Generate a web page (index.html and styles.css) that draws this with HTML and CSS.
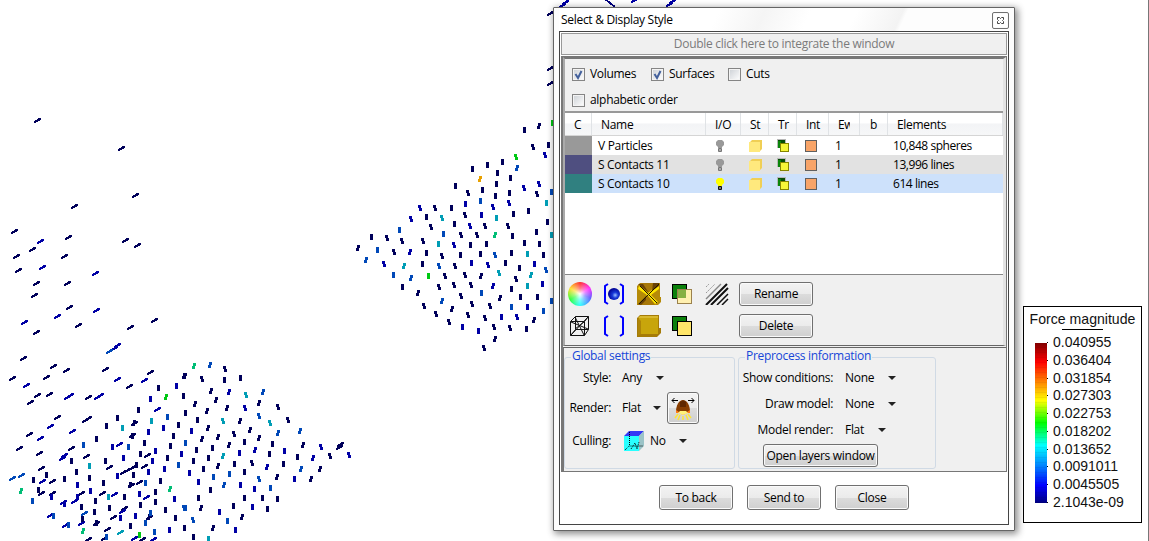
FILE: index.html
```
<!DOCTYPE html>
<html lang="en">
<head>
<meta charset="utf-8">
<title>Select &amp; Display Style</title>
<link rel="stylesheet" href="styles.css">
</head>
<body>
<svg class="plot" width="1149" height="541" shape-rendering="crispEdges"></svg>
<div class="edge"></div>

<svg class="defs" width="0" height="0">
  <defs>
    <symbol id="bulb" viewBox="0 0 10 14"><path d="M3 1h4l2 2v3L7 8v1H3V8L1 6V3z"/><path d="M3.500 9.500h3v3h-3zM3 11h4" fill="#ddd" stroke="currentColor"/></symbol>
    <symbol id="box" viewBox="0 0 13 12"><path d="M3 0h10v9l-3 3V3H0z" fill="#f0cf55"/><path d="M0 2h11v10H0z" fill="#ffe97d"/></symbol>
    <symbol id="trans" viewBox="0 0 12 13"><path d="M0 0h9v9H0z" fill="#b8b8b8"/><path d="M1 1h7v8H1z" fill="#064d06"/><path d="M1 2h3v7H1z" fill="#0a850a"/><rect x="3.500" y="4.500" width="8" height="8" fill="#f6f638" stroke="#858500"/></symbol>
    <symbol id="tick" viewBox="0 0 13 13"><path d="M3.500 6l2.500 4 3.500-7" fill="none" stroke="#43609c" stroke-width="2"/></symbol>
  </defs>
</svg>

<section class="window">
  <header class="title"><span>Select &amp; Display Style</span>
    <button class="x"><svg width="9" height="9" viewBox="0 0 9 9"><path d="M1.500 1.500h2l1 1 1-1h2v2l-1 1 1 1v2h-2l-1-1-1 1h-2v-2l1-1-1-1z" fill="none" stroke="#444"/></svg></button>
  </header>
  <div class="client">
    <div class="dock">Double click here to integrate the window</div>
    <div class="body">
      <div class="upper">
        <div class="filters">
          <div class="line">
            <label class="volumes"><i class="check"><svg width="11" height="11" viewBox="1 1 11 11"><use href="#tick" width="13" height="13"/></svg></i>Volumes</label>
            <label class="surfaces"><i class="check"><svg width="11" height="11" viewBox="1 1 11 11"><use href="#tick" width="13" height="13"/></svg></i>Surfaces</label>
            <label><i class="check"></i>Cuts</label>
          </div>
          <div class="line"><label><i class="check"></i>alphabetic order</label></div>
        </div>
        <div class="table">
          <div class="row head"><span>C</span><span>Name</span><span>I/O</span><span>St</span><span>Tr</span><span>Int</span><span class="clip">Ew</span><span>b</span><span>Elements</span></div>
          <div class="row"><i class="swatch grey"></i><span>V Particles</span><svg class="bulb" width="10" height="14"><use href="#bulb"/></svg><svg class="cube" width="13" height="12"><use href="#box"/></svg><svg class="tr" width="12" height="13"><use href="#trans"/></svg><i class="int"></i><span>1</span><span></span><span>10,848 spheres</span></div>
          <div class="row odd"><i class="swatch violet"></i><span>S Contacts 11</span><svg class="bulb" width="10" height="14"><use href="#bulb"/></svg><svg class="cube" width="13" height="12"><use href="#box"/></svg><svg class="tr" width="12" height="13"><use href="#trans"/></svg><i class="int"></i><span>1</span><span></span><span>13,996 lines</span></div>
          <div class="row selected"><i class="swatch teal"></i><span>S Contacts 10</span><svg class="bulb on" width="10" height="14"><use href="#bulb"/></svg><svg class="cube" width="13" height="12"><use href="#box"/></svg><svg class="tr" width="12" height="13"><use href="#trans"/></svg><i class="int"></i><span>1</span><span></span><span>614 lines</span></div>
        </div>
        <div class="tools">
          <i class="wheel"></i>
          <svg width="22" height="22" viewBox="0 0 22 22"><defs><radialGradient id="ball" cx=".6" cy=".6" r=".6"><stop offset="0" stop-color="#9ac0ff"/><stop offset=".4" stop-color="#1638d8"/><stop offset="1" stop-color="#000090"/></radialGradient></defs><path d="M5 1L2 3v16l3 2M17 1l3 2v16l-3 2" fill="none" stroke="#0000ff" stroke-width="2"/><circle cx="11" cy="11" r="6" fill="url(#ball)"/></svg>
          <svg width="24" height="22" viewBox="0 0 24 22"><path d="M3 0h20v14h1v5l-3 3H0V3z" fill="#b58a08"/><path d="M2 3l9 7L22 2v4l-8 6 7 7-3 2-7-8-8 8H1l9-9-9-6z" fill="#ffe600"/><path d="M3 0h16l-7 9zM0 22l10-10 8 10z" fill="#a87808"/><path d="M1 1h5l6 9zM16 0h6v3l-7 5zM1 21l8-8v4l-5 5z" fill="#6a4205"/><path d="M3 3l17 17M22 1L2 21" stroke="#221800"/></svg>
          <svg width="22" height="22" viewBox="0 0 22 22"><rect x="1.500" y="1.500" width="14" height="14" fill="#0b800b" stroke="#000"/><rect x="6.500" y="6.500" width="14" height="14" fill="#fff0b0" stroke="#9b814d"/><path d="M7 7h8v8H7z" fill="#86b043"/></svg>
          <svg width="24" height="22" viewBox="0 0 24 22"><path d="M1 4l3-3M1 10L10 1" stroke="#999" stroke-dasharray="2 1"/><path d="M1 16L16 1" stroke="#888" stroke-width="1.500"/><path d="M1 22L22 1M6 22L23 5" stroke="#111" stroke-width="2"/><path d="M12 22l11-11M17 22l6-6" stroke="#111" stroke-width="1.500"/></svg>
          <button>Rename</button>
          <svg width="22" height="22" viewBox="0 0 22 22"><path d="M1.500 6.500h14v14h-14zM6.500 1.500h13v13h-13zM1.500 6.500l5-5M15.500 6.500l4-5M1.500 20.500l5-6M15.500 20.500l4-6M2 7l17 7M15 7l-9 7M6 2l9 18M19 2L2 20" fill="none" stroke="#111"/></svg>
          <svg width="22" height="22" viewBox="0 0 22 22"><path d="M5 1L2 3v16l3 2M17 1l3 2v16l-3 2" fill="none" stroke="#0000ff" stroke-width="2"/></svg>
          <svg width="24" height="22" viewBox="0 0 24 22"><path d="M3 0h19v13h2v5l-4 4H0V3z" fill="#a57b08"/><path d="M2 3h19v16H2z" fill="#c8a50b"/><path d="M3 1h18v2H1z" fill="#d8b82f"/><path d="M1 3l3 3v13l-3 2z" fill="#ae8508"/></svg>
          <svg width="22" height="22" viewBox="0 0 22 22"><rect x="1.500" y="1.500" width="14" height="14" fill="#0b800b" stroke="#000"/><rect x="6.500" y="6.500" width="14" height="14" fill="#ffe66a" stroke="#000"/></svg>
          <i></i>
          <button>Delete</button>
        </div>
      </div>
      <div class="lower">
        <fieldset class="global"><legend>Global settings</legend>
          <div class="field style"><span>Style:</span><span>Any</span><i class="arrow"></i></div>
          <div class="field render"><span>Render:</span><span>Flat</span><i class="arrow"></i>
            <button class="lamp"><svg width="26" height="26" viewBox="0 0 26 26"><path d="M2 5.500h6M4.500 3L2 5.500 4.500 8M18 5.500h6M21.500 3L24 5.500 21.500 8" fill="none" stroke="#000"/><path d="M6 17c0-7 3-12 7-12s7 5 7 12l-3 1H9z" fill="#873d00"/><path d="M10 7c2-2 4-2 6 0v5h-6z" fill="#602800"/><path d="M6 15l3 2h8l3-2v3h-3l-4 2-4-2H6z" fill="#ff7b16"/><path d="M10 16h6l2 2-5 2-5-2z" fill="#fff27a"/><path d="M8 19l-3 4M10 20l-2 5M13 21v4M16 20l2 5M18 19l3 4" stroke="#ffe536" stroke-width="1.500"/></svg></button></div>
          <div class="field culling"><span>Culling:</span><svg width="20" height="20" viewBox="0 0 20 20"><path d="M0 5h15v15H0z" fill="#29ffff"/><path d="M0 5l5-5h15l-5 5z" fill="#3438f5"/><path d="M15 5l5-5v15l-5 5z" fill="#9bc4c8"/><path d="M5.500 1v14h14M1 19l4-4M7 18l4-6 2 6 2-7" fill="none" stroke="#000" stroke-dasharray="1 1"/></svg><span>No</span><i class="arrow"></i></div>
        </fieldset>
        <fieldset class="pre"><legend>Preprocess information</legend>
          <div class="field"><span>Show conditions:</span><span>None</span><i class="arrow"></i></div>
          <div class="field"><span>Draw model:</span><span>None</span><i class="arrow"></i></div>
          <div class="field short"><span>Model render:</span><span>Flat</span><i class="arrow"></i></div>
          <button class="layers">Open layers window</button>
        </fieldset>
      </div>
    </div>
    <footer><button>To back</button><button>Send to</button><button>Close</button></footer>
  </div>
</section>

<aside class="scale">
  <h2>Force magnitude</h2>
  <div class="values"><i class="ramp"></i>
    <ol><li>0.040955</li><li>0.036404</li><li>0.031854</li><li>0.027303</li><li>0.022753</li><li>0.018202</li><li>0.013652</li><li>0.0091011</li><li>0.0045505</li><li>2.1043e-09</li></ol>
  </div>
</aside>
<script src="marks.js"></script>
</body>
</html>
```
FILE: styles.css
```
* { box-sizing: border-box; }
body { margin: 0; width: 1149px; height: 541px; overflow: hidden; position: relative; background: #fff; font: 12px/16px "Open Sans", "Noto Sans", sans-serif; letter-spacing: -0.3px; color: #000; }
.plot { position: absolute; left: 0; top: 0; }
.defs { position: absolute; }
.edge { position: absolute; right: 0; top: 0; width: 1px; height: 541px; background: #777; }
button { font: inherit; letter-spacing: inherit; color: #000; padding: 0; border: 1px solid #707070; border-radius: 3px; background: linear-gradient(#f3f3f3, #ebebeb 50%, #dcdcdc 51%, #cfcfcf); box-shadow: inset 0 0 0 1px #fafafa; }
.window { position: absolute; left: 553px; top: 7px; width: 462px; height: 524px; border: 1px solid #656565; border-radius: 1px; background: #fdfdfd; box-shadow: 2px 2px 7px 1px rgba(0,0,0,.45); padding: 0 5px; }
.title { height: 23px; display: flex; justify-content: space-between; padding: 4px 0 0 2px; background: linear-gradient(115deg, #fff 0 35%, #f5f5f5 45%, #fff 55% 65%, #f3f3f3 75%, #fdfdfd 76%); }
.x { width: 17px; height: 17px; border-radius: 2px; background: #fff; display: grid; place-items: center; }
.client { border: 1px solid #444; height: 494px; width: 450px; background: #fff; padding: 1px; }
.dock { height: 22px; width: 446px; border: 1px solid #999; background: #f0f0f0; text-align: center; line-height: 20px; color: #7b7b7b; }
.body { width: 446px; margin-top: 1px; border: 1px solid #777; border-left: 2px solid #777; background: #f0f0f0; height: 416px; }
.upper { height: 289px; border-top: 2px solid #777; border-left: 2px solid #aaa; border-right: 3px solid #e3e3e3; border-bottom: 1px solid #666; }
.filters { height: 52px; padding: 7px 0 0 7px; }
.line { display: flex; height: 26px; }
label { display: flex; gap: 5px; align-items: center; height: 16px; }
.volumes { width: 79px; }
.surfaces { width: 77px; }
.check { width: 13px; height: 13px; border: 1px solid #858585; background: linear-gradient(135deg, #ccd0d5, #fff); box-shadow: inset 0 0 0 1px #f4f4f4; display: block; }
.check svg { display: block; }
.table { height: 164px; border-top: 2px solid #999; background: #fff; border-bottom: 1px solid #888; }
.row { display: grid; grid-template-columns: 27px 114px 35px 28px 28px 32px 30px 29px 1fr; height: 19px; align-items: center; }
.row > span { padding-left: 6px; white-space: nowrap; }
.head { height: 23px; background: linear-gradient(#fff 45%, #f3f4f6 50%, #f6f7f8); border-bottom: 1px solid #d5d5d5; }
.head > span { padding-left: 9px; border-right: 1px solid #e0e3e6; height: 22px; line-height: 24px; overflow: hidden; }
.row .clip { width: 30px; border-right: 0; clip-path: inset(0 9px 0 0); }
.head > span:nth-child(8) { padding-left: 10px; border-left: 1px solid #e0e3e6; }
.swatch { height: 19px; width: 27px; }
.grey { background: #999; }
.violet { background: #4f4f80; }
.teal { background: #308080; }
.odd { background: #e2e2e2; }
.selected { background: #cde1fb; }
.bulb { margin-left: 9px; color: #777; fill: #999; }
.on { color: #111; fill: #ff0; }
.cube { margin-left: 8px; }
.tr { margin-left: 8px; }
.int { width: 12px; height: 12px; background: #f8a468; border: 1px solid #606060; margin-left: 8px; }
.row > span:last-child { padding-left: 5px; letter-spacing: -.45px; }
.head > span:last-child { padding-left: 9px; letter-spacing: inherit; }
.tools { display: grid; grid-template-columns: 34px 34px 34px 34px 35px 74px; grid-template-rows: 24px 24px; row-gap: 8px; padding: 7px 0 0 3px; align-items: center; }
.tools button { height: 24px; }
.wheel { width: 24px; height: 24px; border-radius: 50%; background: radial-gradient(circle closest-side, #fff 0, #fff6 45%, transparent 95%), conic-gradient(#ff3030, #ff30ff 60deg, #6060ff 110deg, #30ffff 180deg, #30ff40 240deg, #ffe030 300deg, #ff3030); }
.tools svg { margin-left: 1px; }
.lower { height: 124px; border-top: 1px solid #666; border-left: 1px solid #777; margin-top: 1px; display: flex; align-items: flex-start; padding: 2px 0 0; gap: 3px; }
fieldset { margin: 0; border: 1px solid #d0dae5; border-radius: 3px; padding: 0; height: 119px; min-width: 0; }
.global { width: 171px; }
.pre { width: 198px; }
legend { color: #1646d8; padding: 0 1px; margin-left: 6px; height: 14px; line-height: 12px; margin-bottom: 1px; }
.field { display: grid; align-items: center; height: 26px; grid-template-columns: 94px 31px 8px; column-gap: 12px; }
.field > span:first-child { text-align: right; }
.arrow { border: 4px solid transparent; border-top-color: #222; border-bottom: 0; width: 8px; }
.pre .short { grid-template-columns: 94px 21px 8px; }
.global .field { grid-template-columns: 45px 23px 8px; column-gap: 11px; margin-left: 1px; }
.global .render { height: 34px; grid-template-columns: 45px 20px 8px 32px; }
.render .lamp { margin-left: -5px; }
.global .culling { grid-template-columns: 45px 20px 15px 8px; height: 32px; }
.culling svg { margin-left: 2px; }
.culling > span:nth-child(3) { margin-left: -3px; }
.lamp { width: 32px; height: 32px; display: grid; place-items: center; }
.layers { width: 115px; height: 23px; margin-left: 24px; display: block; margin-top: 1px; line-height: 20px; }
footer { display: flex; gap: 14px; padding: 13px 0 0 98px; }
footer button { width: 74px; height: 25px; }
.scale { position: absolute; left: 1023px; top: 306px; width: 119px; height: 217px; border: 1px solid #000; background: #fff; font: 14px/18px "Liberation Sans", Arial, sans-serif; letter-spacing: 0; color: #111; }
.scale h2 { font: inherit; font-size: 14.1px; line-height: 17px; margin: 4px 0 0; text-align: center; white-space: nowrap; }
.scale h2::after { content: ""; display: block; width: 41px; height: 1px; background: #000; margin: 1px auto 0; }
.values { display: flex; padding: 3px 0 0 11px; }
.ramp { width: 12px; height: 160px; margin-top: 10px; background: repeating-linear-gradient(transparent 0 4px, rgba(0,0,0,.05) 4px 5px), linear-gradient(#800000, #f00 12%, #ff8000 24%, #ff0 36%, #0f0 50%, #0ff 64%, #0080ff 77%, #00f 89%, #000080); }
ol { list-style: none; margin: 0; padding: 0; }
li { height: 17.78px; padding-left: 6px; position: relative; }
li::before { content: ""; position: absolute; left: 0; top: 9px; width: 1px; height: 1px; background: #000; }
```
FILE: marks.js
```
// Contact marks; coordinates are thirds of a pixel from each field's origin.
// Kinds: s slanted, v vertical, k kinked right at top, j kinked left at top.
const colours = { n: '#00005a', b: '#0000a5', m: '#0048b8', t: '#009db5', g: '#00bd76', l: '#00c814', o: '#e8a000' };
const shapes = {
  s: '<path d="M-3 1h1v-1h2v-1h1v-1h3v2h-1v1h-2v1h-2v1h-2z"/>',
  v: '<path d="M-1 -3h3v6h-3z"/>',
  k: '<path d="M-1 -3h3v3h-1v3h-3v-3h1z"/>',
  j: '<path d="M-2 -3h3v3h1v3h-3v-3h-1z"/>'
};
const fields = [
  [0, 90, {
    sn: '112,91 364,174 405,315 222,349 43,424 206,440 97,477 49,497 193,499 376,451 412,465 55,541 108,580 201,580 103,616 207,650 234,705 110,727 391,712 463,691',
    sb: '121,454 127,532 286,549 290,661 171,679 73,697'
  }],
  [0, 340, {
    sn: '69,54 160,78 139,110 198,91 38,114 112,166 147,163 92,187 316,86 387,139 451,95 171,232 256,240 264,234 266,172 88,282 118,339 58,325 124,384 156,422 123,460 158,460 265,597 290,550 323,566 313,595 215,325 258,348 328,380 370,396 382,390 394,385 404,379 432,379 397,284 418,427 393,435 442,345 404,248 244,460 307,460 339,530 448,532 428,598 374,505',
    sb: '78,135 203,171 211,164 292,171 300,165 351,117 434,121 121,293 217,272 151,257 186,354 193,346 128,424 222,483 190,487 357,312 343,461 438,471 366,512 243,550 152,524 197,555 404,593 459,596 344,23 352,15 472,208',
    sm: '327,34 64,406 37,415 252,520',
    st: '360,577',
    vn: '320,259 353,235 289,298 214,364 229,397 139,405 100,421 193,416 268,415 115,451 244,500 247,537 283,517 286,484 310,429 328,505 373,470 421,495 391,557 288,550 400,405 421,343 433,310 466,455 466,487 481,422 496,511 526,535 415,211 474,143 550,169 535,256 520,289 511,319 502,353 409,374 397,288 556,220 553,563 317,363',
    kn: '555,108 404,248 391,435 448,532',
    vb: '232,435 154,470 232,470 271,454 337,322 370,355 352,408 418,461 361,533 406,527 493,386 457,364 466,332 544,343 445,275 490,265 451,178 529,139 523,478 508,569 446,397 568,400 194,491',
    vm: '250,316 97,482 385,322 502,232 555,310 535,376 436,430 451,518 463,577 436,550 205,555 160,527 319,592 555,503',
    vt: '367,265 268,379 454,244 325,470',
    kg: '63,452 250,573 512,446',
    kl: '500,171', vl: '418,584'
  }],
  [180, 340, {
    kn: '14,108 47,191 94,154 108,181 82,214 142,204 182,244 211,269 86,265 115,291 66,298 148,314 239,293 116,379 291,410 370,316 393,418 101,565 239,188 420,386 187,530 64,504',
    jn: '135,86 162,281 66,117 218,368 294,202 324,240 452,349',
    vn: '133,121 181,114 10,169 16,220 52,241 97,325 49,331 85,355 40,364 70,388 193,307 277,311 268,343 310,371 352,352 163,371 193,395 193,475 160,499 292,478 262,506 247,473 55,473 91,450 13,563 40,592',
    vb: '34,274 28,400 55,425 4,343 223,446 181,436 313,334 343,418 217,502 118,515 166,571 178,338',
    kb: '148,156 227,330 399,353 261,382', jb: '423,320 195,203 507,345',
    vm: '16,310 148,403 271,443 142,544 100,412',
    km: '92,76 251,156 294,280 362,272 363,388 134,436', jm: '237,229 239,418 40,540 14,503',
    jt: '129,242 200,165 272,250', kt: '131,349', vt: '85,598', kg: '42,79', sn: '477,320 482,311'
  }],
  [345, 100, {
    vn: '538,91 610,136 382,208 331,259 427,194 472,187 457,218 454,251 451,289 496,235 493,278 412,270 319,325 244,351 79,412 244,460 232,493 172,561 328,373 406,461 346,466 424,431 376,436 502,407 505,341 550,334 607,367 574,397 583,431 538,430 595,464 499,460 481,488 523,503 499,566 526,590 577,592 544,686',
    kn: '583,78 39,445 220,578 323,627 451,718 567,660 409,528 467,594',
    jn: '564,142 369,278 362,344 258,382 236,422 173,422 147,455 128,415 293,467 422,377 489,377 397,405 330,498 300,527 282,562 329,554 360,525 378,554 348,587 381,611 371,645 420,655 447,681 435,618 495,685 514,536 576,283 312,667 348,404 272,324 238,619',
    vb: '361,313 409,346 379,488 568,491 592,553 400,694 469,652 352,682 547,620',
    jb: '225,324 198,356 375,377 327,436 492,310 602,166 583,251 537,263 431,496 119,492 446,322 518,650',
    kb: '444,559 195,457', vm: '163,390 97,451 145,526 406,303 295,401 409,580 499,620 595,632 620,277 620,603',
    km: '517,205 63,480 198,534 292,602', jm: '451,464 605,509 282,497',
    vt: '454,355 280,433 547,461 547,559 604,310 619,406', jt: '291,355 463,518', kt: '179,498 560,524',
    jl: '513,172', vl: '250,529 623,70', kg: '452,404', ko: '406,238', jn2: '273,643 418,743'
  }],
  [540, 0, { sn: '32,40 32,204 32,250', sb: '68,14 76,6 282,1 387,12 397,4' }]
];
let out = '<path d="M605 -1l10 8" stroke="#000080" stroke-width="2"/>';
for (const [x, y, sets] of fields)
  for (const [key, pts] of Object.entries(sets))
    for (const p of pts.split(' ')) {
      const [a, b] = p.split(',').map(Number);
      out += `<g fill="${colours[key[1]]}" transform="translate(${x + Math.floor(a / 3)} ${y + Math.round(b / 3)})">${shapes[key[0]]}</g>`;
    }
document.querySelector('.plot').innerHTML = out;
```
